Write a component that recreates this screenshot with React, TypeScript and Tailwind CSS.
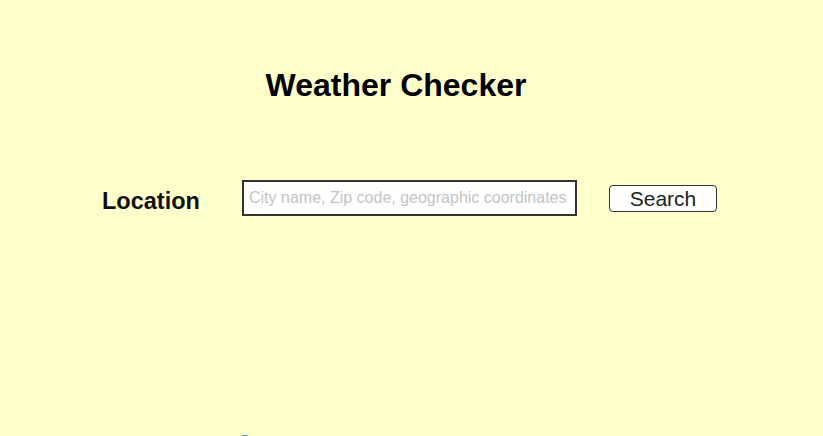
export default function App() {
  return (
    <div className="h-[436px] w-full overflow-hidden bg-[#ffffcc] font-['Liberation_Sans',Arial,sans-serif] text-black">
      {/* Header */}
      <div className="mt-[67px] w-[792px] text-center text-[32px] font-bold leading-[37px]">
        Weather Checker
      </div>

      {/* Search row */}
      <div className="mt-[76px] flex items-center pl-[102px]">
        <label htmlFor="loc" className="mt-[5px] w-[98px] whitespace-nowrap text-[23.5px] font-bold leading-[28px] text-[#111]">
          Location
        </label>
        <input
          id="loc"
          type="text"
          placeholder="City name, Zip code, geographic coordinates"
          className="ml-[42px] h-[36px] w-[335px] border-2 border-[#333] bg-white pl-[5px] text-[16px] text-black outline-none placeholder:text-[#c4c4c4]"
        />
        <button className="ml-[32px] h-[27px] w-[108px] rounded-[4px] border border-[#333] bg-white text-[21px] leading-none text-[#222]">
          Search
        </button>
      </div>

      {/* Result icon (cut off at page bottom) */}
      <div className="mt-[219px] pl-[241px]">
        <div className="h-[10px] w-[8px] rounded-t-[3px] bg-[#4a86c8]" />
      </div>
    </div>
  );
}
